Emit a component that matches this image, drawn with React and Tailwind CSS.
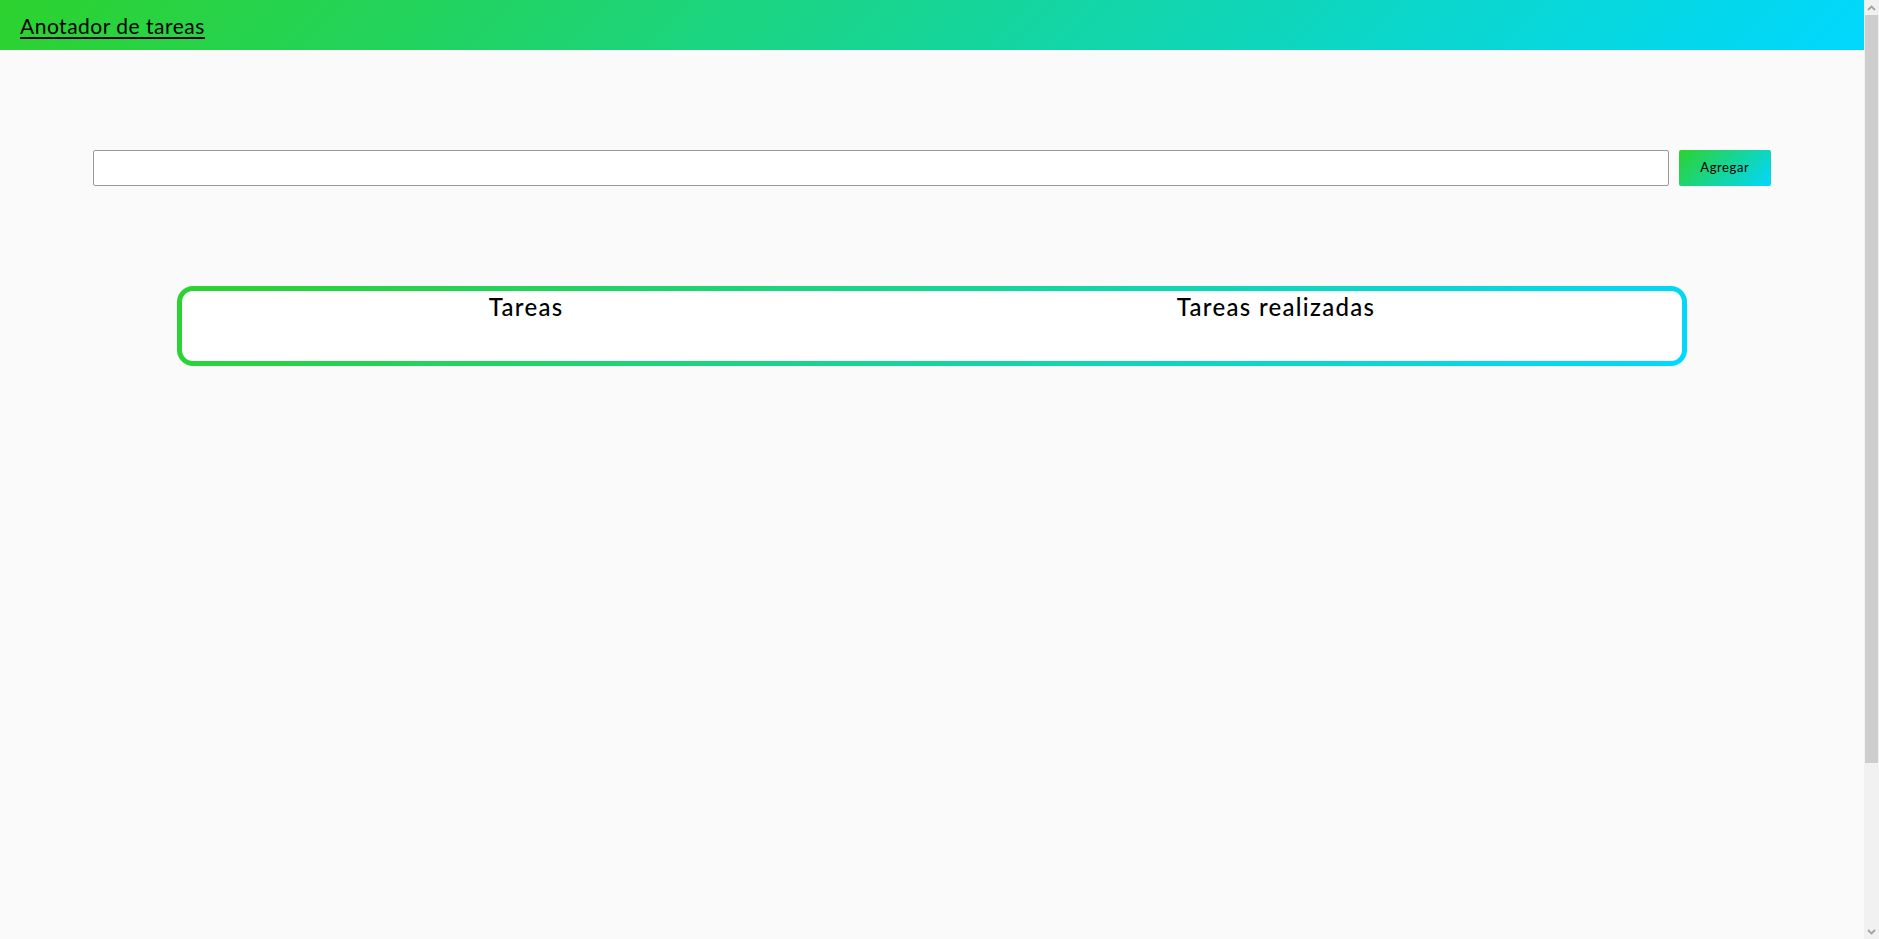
import { useState } from "react";

const font = { fontFamily: "Lato, 'Noto Sans', sans-serif" };

function Chevron({ down }) {
  return (
    <svg width="9" height="6" viewBox="0 0 9 6" className={down ? "rotate-180" : ""}>
      <path d="M1 5 L4.5 1.5 L8 5" fill="none" stroke="#a3a3a3" strokeWidth="1.8" />
    </svg>
  );
}

function App() {
  const [task, setTask] = useState("");

  return (
    <div className="flex h-screen overflow-hidden bg-[#fafafa] text-black" style={font}>
      <main className="min-w-0 flex-1">
        <header className="flex h-[50px] items-center bg-[linear-gradient(135deg,#2dd22e,#00d8ff)] px-5">
          <a href="#" className="text-[21px] leading-none tracking-[0.5px] text-black underline underline-offset-[3px]">
            Anotador de tareas
          </a>
        </header>

        <div className="mx-auto mt-[100px] flex w-[90%] items-center gap-[10px]">
          <input
            type="text"
            value={task}
            onChange={(event) => setTask(event.target.value)}
            className="h-9 flex-1 rounded-[2px] border border-[#999] bg-white px-2 text-sm outline-none"
          />
          <button className="h-9 w-[92px] rounded-[2px] bg-[linear-gradient(135deg,#2dd22e,#00d8ff)] text-[13px] tracking-[0.6px] text-black">
            Agregar
          </button>
        </div>

        <section className="mx-auto mt-[100px] w-[1510px] rounded-[16px] bg-[linear-gradient(135deg,#2dd22e,#00d8ff)] p-[5px]">
          <div className="flex h-[70px] items-start justify-around rounded-[11px] bg-white pt-[1px]">
            <h2 className="text-[24px] font-medium leading-[30px] tracking-[1.3px]">Tareas</h2>
            <h2 className="text-[24px] font-medium leading-[30px] tracking-[1.3px]">Tareas realizadas</h2>
          </div>
        </section>
      </main>

      <aside className="flex w-[15px] flex-col bg-[#f1f1f1]">
        <div className="flex h-[15px] items-center justify-center">
          <Chevron />
        </div>
        <div className="mx-[1px] h-[748px] bg-[#cdcdcd]" />
        <div className="flex-1" />
        <div className="flex h-[15px] items-center justify-center">
          <Chevron down />
        </div>
      </aside>
    </div>
  );
}

export default App;
